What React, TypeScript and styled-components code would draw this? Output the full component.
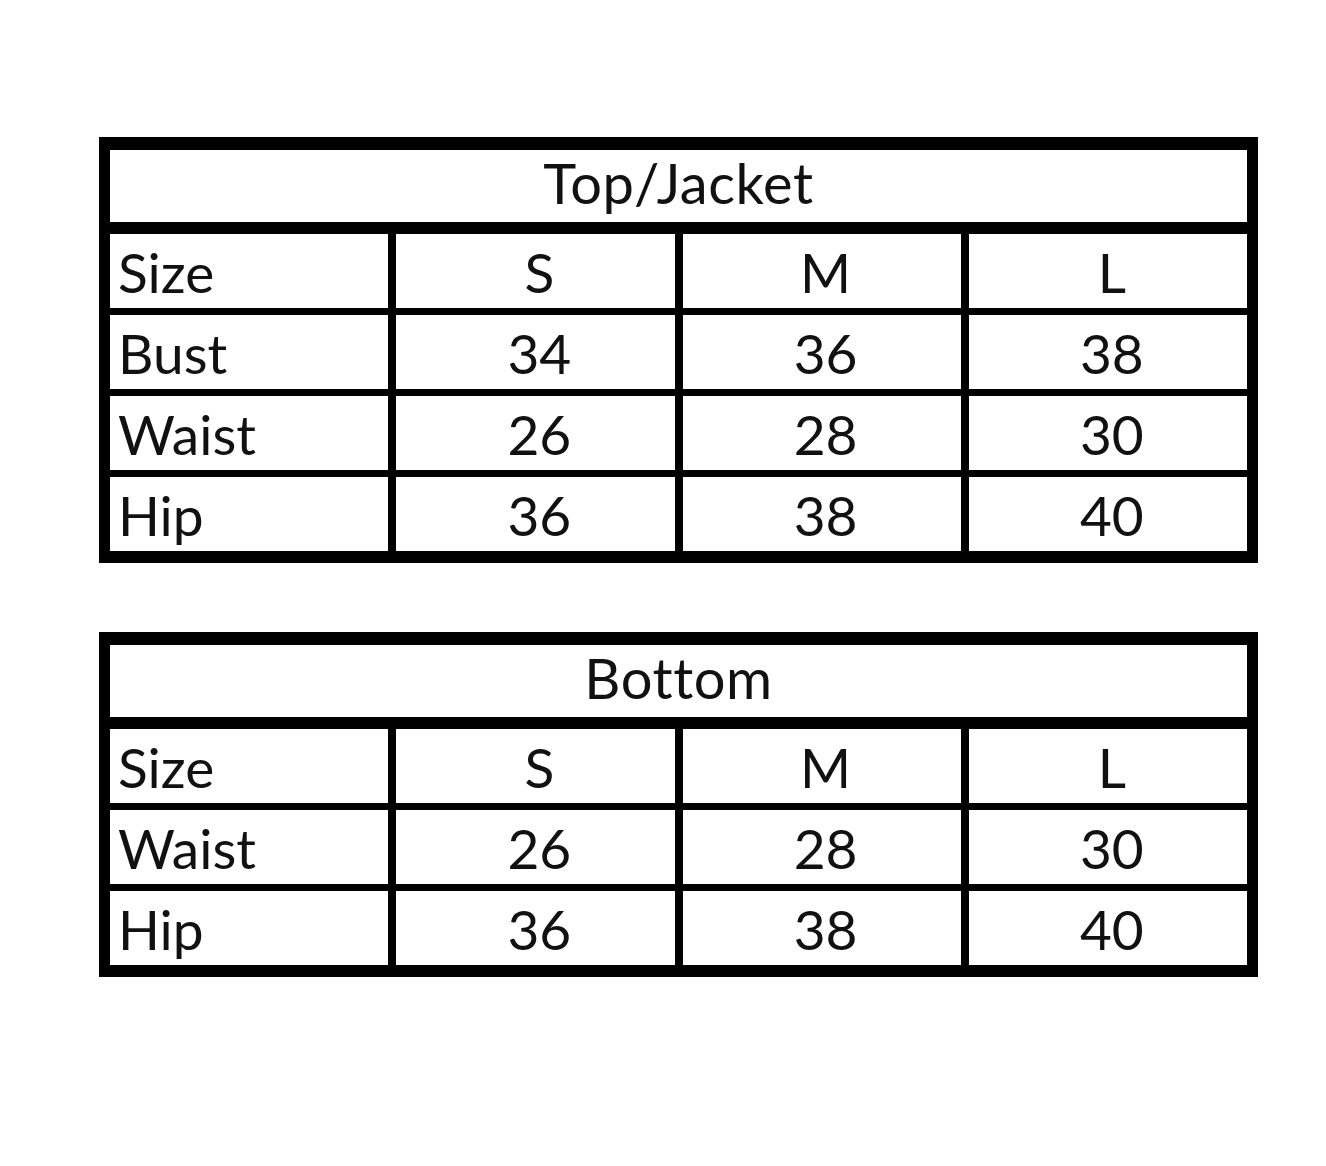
import React from "react";
import styled, { createGlobalStyle } from "styled-components";

const GlobalStyle = createGlobalStyle`
	html, body {
		margin: 0;
		padding: 0;
		background: #ffffff;
	}
	body {
		font-family: Lato, "Open Sans", "Liberation Sans", sans-serif;
		color: #111111;
	}
`;

const Page = styled.div`
	width: 1326px;
	height: 1166px;
	box-sizing: border-box;
	padding: 137px 0 0 99px;
	display: flex;
	flex-direction: column;
	gap: 69px;
`;

const Table = styled.div`
	width: 1159px;
	box-sizing: border-box;
	background: #000000;
	border-style: solid;
	border-color: #000000;
	border-width: 13px 11px 12px 11px;
	display: flex;
	flex-direction: column;
	gap: 12px;
`;

const Title = styled.div`
	height: 72px;
	background: #ffffff;
	display: flex;
	align-items: center;
	justify-content: center;
	font-size: 56px;
	letter-spacing: 0.6px;
	line-height: 1;
	padding-bottom: 6px;
	box-sizing: border-box;
`;

const Grid = styled.div`
	display: grid;
	grid-template-columns: repeat(4, 1fr);
	grid-auto-rows: 74px;
	column-gap: 8px;
	row-gap: 7px;
`;

const Cell = styled.div<{ $label?: boolean }>`
	background: #ffffff;
	display: flex;
	align-items: center;
	justify-content: ${(p) => (p.$label ? "flex-start" : "center")};
	padding-left: 8px;
	font-size: 55px;
	line-height: 1;
	padding-top: 2px;
	box-sizing: border-box;
`;

type Row = { label: string; values: string[] };

const SizeTable = (props: { title: string; rows: Row[] }) => (
	<Table>
		<Title>{props.title}</Title>
		<Grid>
			{props.rows.map((row) => (
				<React.Fragment key={row.label}>
					<Cell $label>{row.label}</Cell>
					{row.values.map((v, i) => (
						<Cell key={i}>{v}</Cell>
					))}
				</React.Fragment>
			))}
		</Grid>
	</Table>
);

const topRows: Row[] = [
	{ label: "Size", values: ["S", "M", "L"] },
	{ label: "Bust", values: ["34", "36", "38"] },
	{ label: "Waist", values: ["26", "28", "30"] },
	{ label: "Hip", values: ["36", "38", "40"] },
];

const bottomRows: Row[] = [
	{ label: "Size", values: ["S", "M", "L"] },
	{ label: "Waist", values: ["26", "28", "30"] },
	{ label: "Hip", values: ["36", "38", "40"] },
];

export default function App() {
	return (
		<>
			<GlobalStyle />
			<Page>
				<SizeTable title="Top/Jacket" rows={topRows} />
				<SizeTable title="Bottom" rows={bottomRows} />
			</Page>
		</>
	);
}
